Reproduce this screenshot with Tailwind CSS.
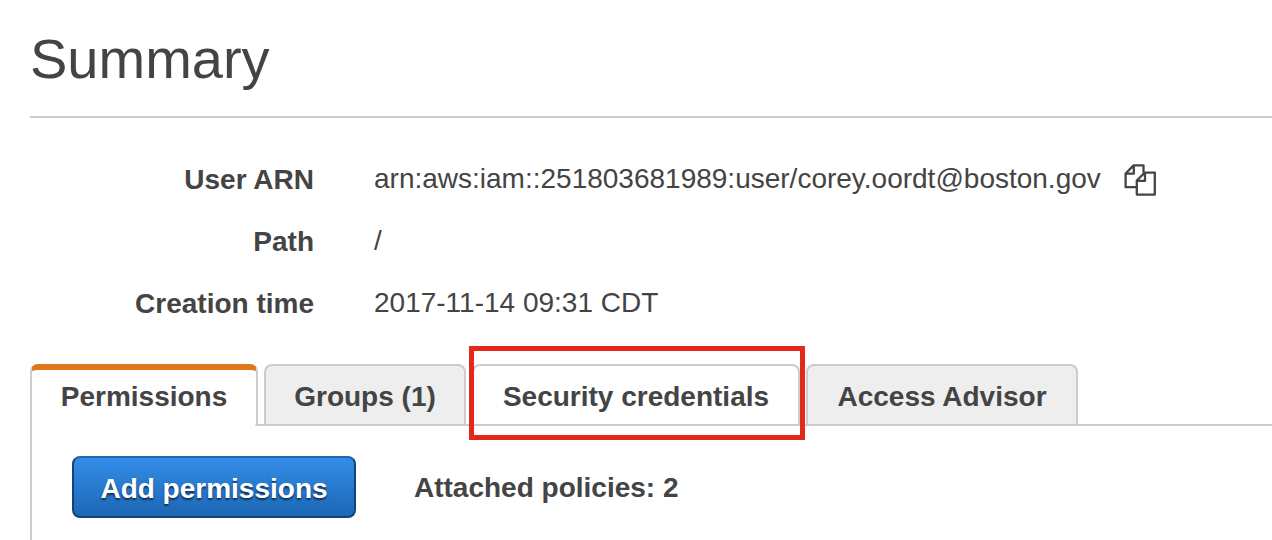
<!DOCTYPE html>
<html lang="en">
<head>
<meta charset="utf-8">
<title>Summary</title>
<script src="https://cdn.jsdelivr.net/npm/@tailwindcss/browser@4"></script>
</head>
<body class="bg-white font-['Liberation_Sans',Arial,sans-serif] text-[28px] leading-8 text-[#444444]">
<main class="flex min-h-screen flex-col pl-[30px]">
  <h1 class="border-b-2 border-[#cccccc] pt-[27px] pb-[25px] text-[56px] leading-16">Summary</h1>
  <dl class="grid grid-cols-[284px_1fr] gap-x-15 gap-y-[30px] pt-[46px] whitespace-nowrap">
    <dt class="text-right font-bold">User ARN</dt>
    <dd class="flex items-start gap-[23px] leading-[30px]">arn:aws:iam::251803681989:user/corey.oordt@boston.gov
      <button type="button" aria-label="Copy user ARN" class="block">
        <svg class="block h-8 w-8" viewBox="0 0 32 32" fill="none" stroke="#444444" stroke-width="2.3" stroke-linejoin="round" aria-hidden="true">
          <path d="M12.5 23.2H1.6V9.5L9.6 1.4H19.5V8.8M9.8 1.6V9.7H1.8"/>
          <path d="M12.8 16.5L20.8 8.6H30.8V30.6H12.8ZM21 8.8V16.8H13"/>
        </svg>
      </button>
    </dd>
    <dt class="text-right font-bold">Path</dt>
    <dd class="leading-[30px]">/</dd>
    <dt class="text-right font-bold">Creation time</dt>
    <dd class="leading-[30px]">2017-11-14 09:31 CDT</dd>
  </dl>
  <div role="tablist" class="mt-11 flex gap-1.5 border-b-2 border-[#cccccc] font-bold whitespace-nowrap">
    <button type="button" role="tab" aria-selected="true" class="-mb-0.5 h-[62px] w-[228px] rounded-t-lg rounded-br-sm border-x-2 border-t-6 border-x-[#cccccc] border-t-[#e07820] bg-white pb-0.5 font-bold">Permissions</button>
    <button type="button" role="tab" aria-selected="false" class="h-15 w-[202px] rounded-t-lg border-2 border-b-0 border-[#cccccc] bg-[#eeeeee] pt-1 font-bold">Groups (1)</button>
    <div class="relative">
      <button type="button" role="tab" aria-selected="false" class="h-15 w-[328px] rounded-t-lg border-2 border-b-0 border-[#cccccc] bg-white pt-1 font-bold">Security credentials</button>
      <span class="pointer-events-none absolute -top-[18px] -right-[5px] -bottom-4 -left-[3px] border-5 border-[#e3291a]"></span>
    </div>
    <button type="button" role="tab" aria-selected="false" class="h-15 w-[272px] rounded-t-lg border-2 border-b-0 border-[#cccccc] bg-[#eeeeee] pt-1 font-bold">Access Advisor</button>
  </div>
  <section class="flex flex-1 items-start gap-[58px] border-l-2 border-[#cccccc] pt-[30px] pl-10 font-bold whitespace-nowrap">
    <button type="button" class="h-[62px] w-[284px] rounded-lg border-2 border-x-[#0f4479] border-t-[#1f68b4] border-b-[#0f4479] bg-linear-to-b from-[#338de8] to-[#1c67b5] pt-1 font-bold text-white text-shadow-[0_2px_2px_rgb(0_0_0/0.6)]">Add permissions</button>
    <p class="pt-4">Attached policies: 2</p>
  </section>
</main>
</body>
</html>
